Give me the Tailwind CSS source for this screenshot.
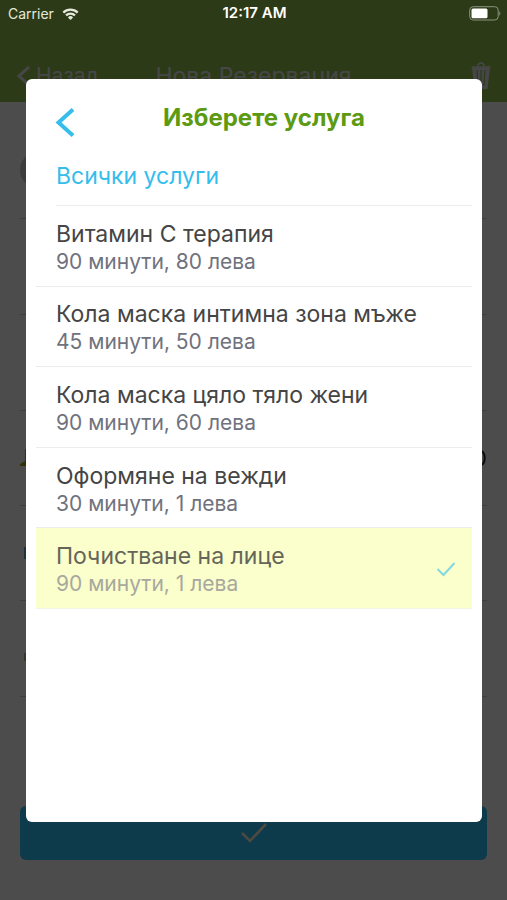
<!DOCTYPE html>
<html lang="bg">
<head>
<meta charset="utf-8">
<meta name="viewport" content="width=device-width, initial-scale=1">
<title>Нова Резервация</title>
<script src="https://cdn.jsdelivr.net/npm/@tailwindcss/browser@4"></script>
</head>
<body class="relative min-h-screen overflow-x-hidden bg-white font-['Inter','Noto_Sans',sans-serif]">

<!-- Reservation screen -->
<div class="flex min-h-screen flex-col">
  <header class="flex h-[102px] items-end justify-between bg-[#96c14d] px-4 pb-[6px] text-[23px] leading-10 text-[#ececf4]">
    <a href="#" class="flex w-24 items-center">
      <svg class="size-5 shrink-0" viewBox="0 0 20 20" fill="none" stroke="currentColor" stroke-width="3" aria-hidden="true"><path d="M13 1 3 10l10 9"/></svg>
      <span class="text-[21px]">Назад</span>
    </a>
    <h1>Нова Резервация</h1>
    <button type="button" class="flex h-10 w-24 items-center justify-end" aria-label="Изтрий">
      <svg class="h-7 w-5" viewBox="0 0 20 28" fill="none" stroke="currentColor" stroke-width="1.5" aria-hidden="true"><path d="M7 4c0-4 6-4 6 0M.5 5h19"/><path d="M1 5.5h18l-2.5 21.5h-13z" fill="currentColor" stroke="none"/><path d="M6 8l1 16M10 8v16M14 8l-1 16" stroke="#96c14d" stroke-width="1.2"/></svg>
    </button>
  </header>
  <main class="flex flex-1 flex-col px-5 pb-10">
    <div class="flex h-[117px] items-center border-b border-[#d0d0d0] pt-5"><span class="size-9 rounded-full bg-[#c8c8c8]"></span></div>
    <div class="h-24 border-b border-[#d0d0d0]"></div>
    <div class="h-24 border-b border-[#d0d0d0]"></div>
    <div class="flex h-[95px] items-center justify-between border-b border-[#d0d0d0]">
      <svg class="size-5" viewBox="0 0 20 20" fill="#a5a020" aria-hidden="true"><path d="M5 1h5v11l4 6H0v-2l5-3z"/></svg>
      <span class="text-[22px] text-[#222]">0</span>
    </div>
    <div class="flex h-[95px] items-center border-b border-[#d0d0d0]"><span class="ml-1 h-3 w-4 bg-[#5ab0d8]"></span></div>
    <div class="flex h-[96px] items-center border-b border-[#d0d0d0] pt-4"><span class="ml-1 h-2 w-4 bg-[#c5b090]"></span></div>
    <button type="button" class="mt-auto flex h-[54px] w-full items-center justify-center rounded-md bg-[#2fc5fa] text-[#fff4e0]" aria-label="Запази">
      <svg class="h-5 w-7" viewBox="0 0 28 20" fill="none" stroke="currentColor" stroke-width="2.6" aria-hidden="true"><path d="m2 10 8 8L26 1"/></svg>
    </button>
  </main>
</div>

<!-- Backdrop -->
<div class="absolute inset-0 bg-black/70"></div>

<!-- Status bar -->
<div class="absolute inset-x-0 top-0 grid h-[27px] grid-cols-3 items-center pr-[6px] pl-2 text-[14px] text-white">
  <div class="flex items-center gap-2 text-[#e4e9dc]">
    <span>Carrier</span>
    <svg class="h-3 w-[17px]" viewBox="0 0 16 12" fill="none" stroke="currentColor" stroke-width="2.2" aria-hidden="true"><path d="M.8 4.6a10.2 10.2 0 0 1 14.4 0M3.5 7.4a6.4 6.4 0 0 1 9 0"/><path d="M8 12 5.4 9.4a3.7 3.7 0 0 1 5.2 0z" fill="currentColor" stroke="none"/></svg>
  </div>
  <span class="text-center text-[15px] font-semibold">12:17 AM</span>
  <svg class="h-[15px] w-8 justify-self-end" viewBox="0 0 32 15" fill="none" role="img" aria-label="Батерия"><rect x=".7" y=".7" width="28.5" height="13.3" rx="3.5" stroke="#8b9380"/><rect x="2.5" y="2.5" width="16" height="9.8" rx="1.5" fill="#fff"/><path d="M30.3 5.3c1.4.6 1.4 3.8 0 4.4z" fill="#8b9380"/></svg>
</div>

<!-- Service picker -->
<section role="dialog" aria-modal="true" aria-labelledby="picker-title" class="absolute top-[79px] right-[25px] bottom-[78px] left-[26px] rounded-md bg-white">
  <div class="relative flex h-[77px] items-start justify-center pt-[23px]">
    <button type="button" class="absolute top-7 left-7 text-[#35bdec]" aria-label="Назад">
      <svg class="h-[30px] w-5" viewBox="0 0 20 30" fill="none" stroke="currentColor" stroke-width="4" aria-hidden="true"><path d="M19 2.5 4.5 15.5l14.5 13"/></svg>
    </button>
    <h2 id="picker-title" class="pl-5 text-[24px] leading-8 font-bold text-[#5c9a12]">Изберете услуга</h2>
  </div>
  <div class="mr-[10px] ml-[30px] border-b border-[#ececec] pb-[9px]">
    <a href="#" class="block h-10 text-[23px] leading-10 text-[#35bdec]">Всички услуги</a>
  </div>
  <ul class="mx-[10px] grid min-h-[403px] auto-rows-fr text-[#454545]">
    <li class="border-b border-[#ececec]"><button type="button" class="flex h-full w-full items-center px-5 pt-1 text-left"><span class="flex-1"><span class="block text-[23px] leading-7">Витамин С терапия</span><span class="block text-[21px] leading-7 text-[#70727d]">90 минути, 80 лева</span></span></button></li>
    <li class="border-b border-[#ececec]"><button type="button" class="flex h-full w-full items-center px-5 pt-1 text-left"><span class="flex-1"><span class="block text-[23px] leading-7">Кола маска интимна зона мъже</span><span class="block text-[21px] leading-7 text-[#70727d]">45 минути, 50 лева</span></span></button></li>
    <li class="border-b border-[#ececec]"><button type="button" class="flex h-full w-full items-center px-5 pt-1 text-left"><span class="flex-1"><span class="block text-[23px] leading-7">Кола маска цяло тяло жени</span><span class="block text-[21px] leading-7 text-[#70727d]">90 минути, 60 лева</span></span></button></li>
    <li class="border-b border-[#ececec]"><button type="button" class="flex h-full w-full items-center px-5 pt-1 text-left"><span class="flex-1"><span class="block text-[23px] leading-7">Оформяне на вежди</span><span class="block text-[21px] leading-7 text-[#70727d]">30 минути, 1 лева</span></span></button></li>
    <li class="border-b border-[#f3f4e4] bg-[#faffcb]"><button type="button" aria-pressed="true" class="flex h-full w-full items-center pt-1 pr-4 pl-5 text-left"><span class="flex-1"><span class="block text-[23px] leading-7 text-[#66655a]">Почистване на лице</span><span class="block text-[21px] leading-7 text-[#a8a89f]">90 минути, 1 лева</span></span><svg class="h-5 w-5" viewBox="0 2 20 20" fill="none" stroke="#82d8e2" stroke-width="2" aria-hidden="true"><path d="m1.5 11 6 6L18.5 5"/></svg></button></li>
  </ul>
</section>
</body>
</html>
